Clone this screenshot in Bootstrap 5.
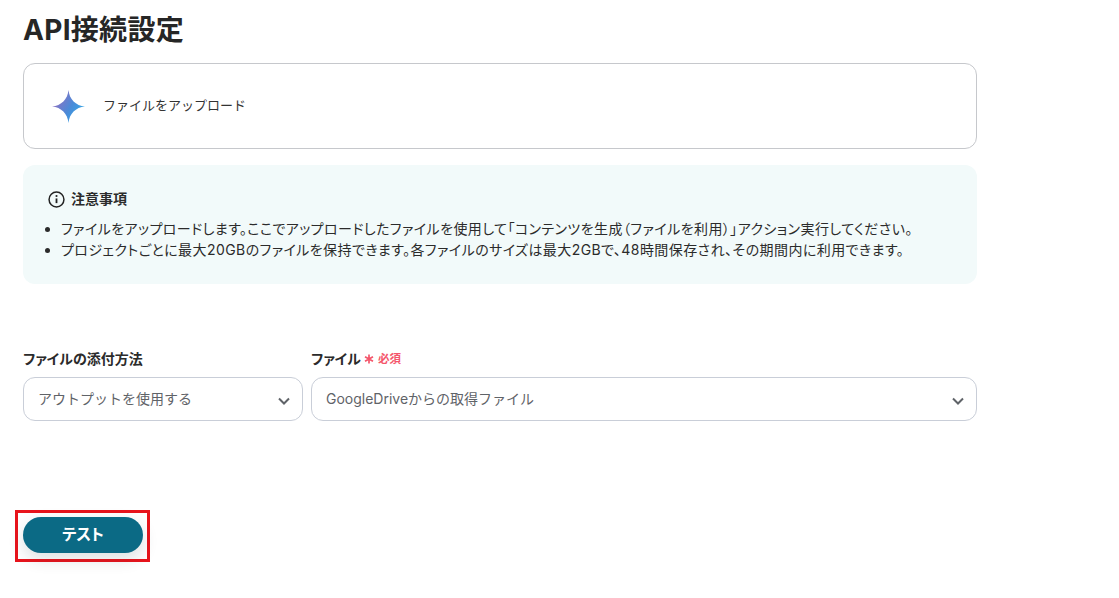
<!DOCTYPE html>
<html lang="ja">
<head>
  <meta charset="UTF-8" />
  <meta name="viewport" content="width=device-width, initial-scale=1" />
  <title>API接続設定</title>
  <link href="https://cdn.jsdelivr.net/npm/bootstrap@5.3.2/dist/css/bootstrap.min.css" rel="stylesheet" />
  <style>
    html, body { height: 598px; overflow: hidden; }
    body {
      background: #fff;
      color: #2b2b2b;
      font-family: Inter, "Noto Sans CJK JP", sans-serif;
    }
    .page-wrap { width: 954px; margin-left: 23px; padding-top: 12px; }
    .page-title { font-size: 28px; font-weight: 700; line-height: 36px; margin: 0 0 15px; color: #262626; letter-spacing: .3px; }
    .action-box {
      height: 86px;
      border: 1px solid #c6c8cc;
      border-radius: 12px;
      padding-left: 28px;
      gap: 18px;
      font-size: 13px;
      color: #333;
    }
    .note-box {
      height: 119px;
      margin-top: 16px;
      background: #f2fafa;
      border-radius: 12px;
      padding: 24px 24px 0 25px;
      font-size: 13px;
      line-height: 21px;
    }
    .note-head { font-size: 14px; font-weight: 700; gap: 6px; height: 20px; margin-bottom: 9px; line-height: 20px; }
    .note-list { padding-left: 13px; margin: 0; font-feature-settings: "palt"; font-size: 14px; letter-spacing: .43px; }
    .form-area { margin-top: 65px; gap: 8px; }
    .field-label { font-size: 14px; font-weight: 700; line-height: 20px; margin-bottom: 8px; gap: 3px; color: #2b2b2b; font-feature-settings: "palt"; }
    .req-mark { color: #f4566b; font-size: 11.5px; font-weight: 700; gap: 4px; }
    .field-select {
      height: 44px;
      border: 1px solid #c9ced8;
      border-radius: 12px;
      padding: 0 12px 2px 14px;
      font-size: 14px;
      color: #5f6368;
    }
    .chevron-icon { margin-top: 6px; }
    .field-short { width: 280px; }
    .field-long { width: 666px; }
    .test-outline {
      width: 135px;
      height: 52px;
      margin: 89px 0 0 -8px;
      border: 3px solid #e8141c;
      padding: 4px 0 0 5px;
    }
    .test-btn {
      width: 120px;
      height: 36px;
      border: 0;
      border-radius: 18px;
      background: #0b6a85;
      color: #fff;
      font-size: 15.5px;
      font-weight: 700;
      font-feature-settings: "palt";
      box-shadow: 0 6px 16px rgba(40, 60, 70, .16);
      padding: 0;
    }
  </style>
</head>
<body>
  <div class="page-wrap">
    <h1 class="page-title">API接続設定</h1>

    <div class="action-box d-flex align-items-center">
      <svg width="33" height="33" viewBox="0 0 32 32">
        <defs>
          <linearGradient id="starGrad" x1="0" y1="0.2" x2="1" y2="0.8">
            <stop offset="0" stop-color="#a06bbd" />
            <stop offset="0.55" stop-color="#4a8ad8" />
            <stop offset="1" stop-color="#2fb0ea" />
          </linearGradient>
        </defs>
        <path d="M16 0C16.8 9 23 15.2 32 16C23 16.8 16.8 23 16 32C15.2 23 9 16.8 0 16C9 15.2 15.2 9 16 0Z" fill="url(#starGrad)" />
      </svg>
      <span>ファイルをアップロード</span>
    </div>

    <div class="note-box">
      <div class="note-head d-flex align-items-center">
        <svg width="17" height="17" viewBox="0 0 16 16" fill="none" stroke="#222">
          <circle cx="8" cy="8" r="7" stroke-width="1.4" />
          <path d="M8 7v4.4" stroke-width="1.7" />
          <circle cx="8" cy="4.7" r="1" fill="#222" stroke="none" />
        </svg>
        <span>注意事項</span>
      </div>
      <ul class="note-list">
        <li>ファイルをアップロードします。ここでアップロードしたファイルを使用して「コンテンツを生成（ファイルを利用）」アクション実行してください。</li>
        <li>プロジェクトごとに最大20GBのファイルを保持できます。各ファイルのサイズは最大2GBで、48時間保存され、その期間内に利用できます。</li>
      </ul>
    </div>

    <div class="form-area d-flex">
      <div class="field-short">
        <div class="field-label">ファイルの添付方法</div>
        <div class="field-select d-flex align-items-center justify-content-between">
          <span>アウトプットを使用する</span>
          <svg class="chevron-icon" width="12" height="8" viewBox="0 0 12 8" fill="none" stroke="#5f6368" stroke-width="2"><path d="M1 1.5l5 5 5-5" /></svg>
        </div>
      </div>
      <div class="field-long">
        <div class="field-label d-flex align-items-center">
          <span>ファイル</span>
          <span class="req-mark d-flex align-items-center">
            <svg width="10" height="10" viewBox="0 0 10 10" stroke="#f4566b" stroke-width="1.7"><path d="M5 0.5v9M1 2.7l8 4.6M9 2.7L1 7.3" /></svg>
            <span>必須</span>
          </span>
        </div>
        <div class="field-select d-flex align-items-center justify-content-between">
          <span>GoogleDriveからの取得ファイル</span>
          <svg class="chevron-icon" width="12" height="8" viewBox="0 0 12 8" fill="none" stroke="#5f6368" stroke-width="2"><path d="M1 1.5l5 5 5-5" /></svg>
        </div>
      </div>
    </div>

    <div class="test-outline">
      <button class="test-btn" type="button">テスト</button>
    </div>
  </div>
  <script src="https://cdn.jsdelivr.net/npm/bootstrap@5.3.2/dist/js/bootstrap.bundle.min.js"></script>
</body>
</html>
